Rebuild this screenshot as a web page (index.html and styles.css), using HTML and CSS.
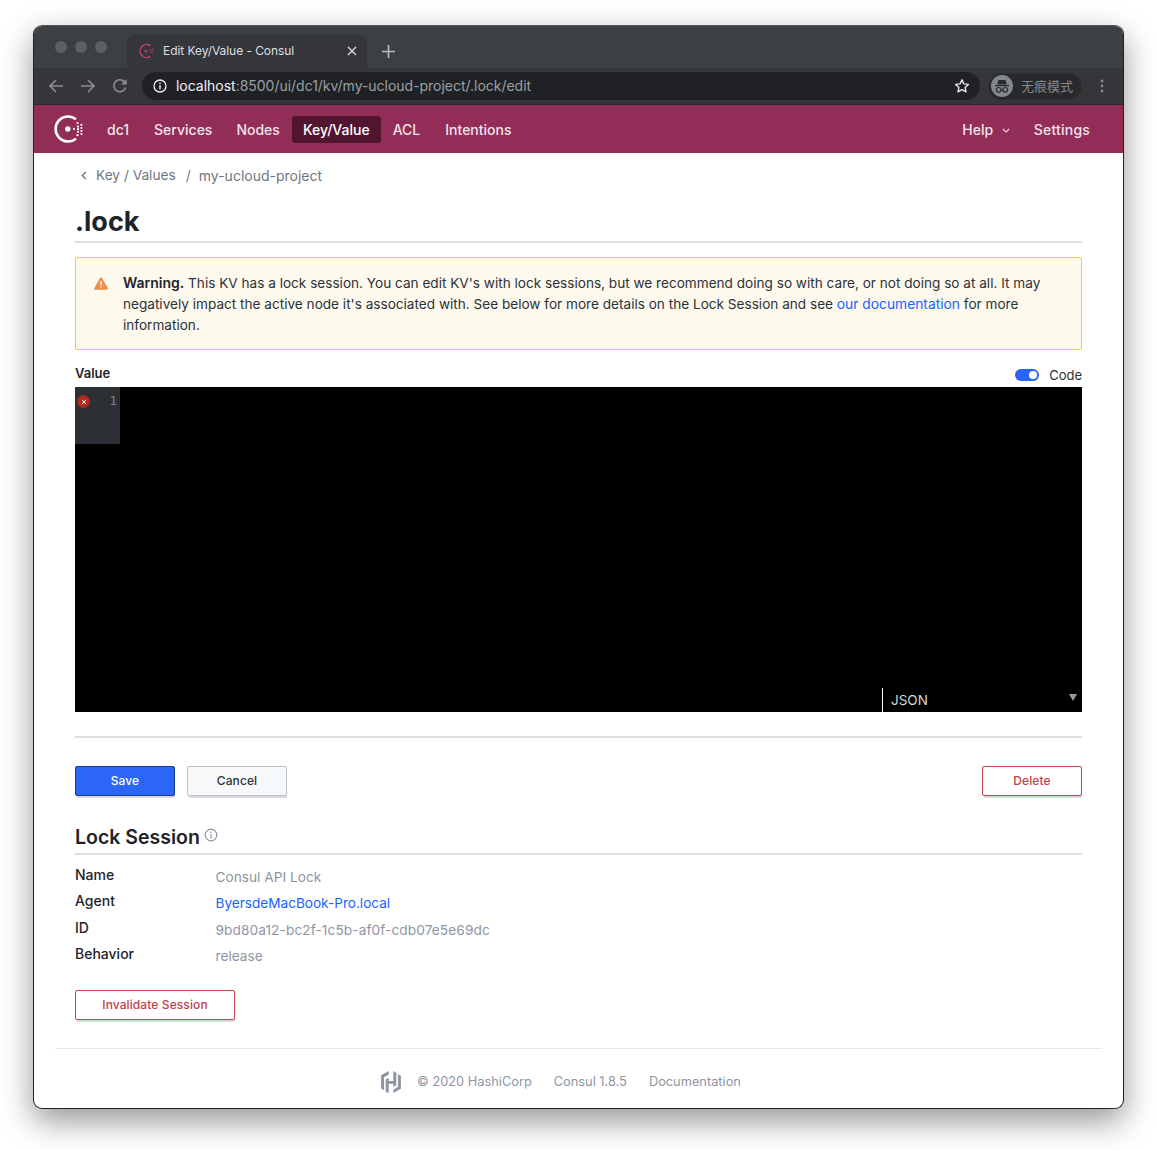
FILE: index.html
```html
<!DOCTYPE html>
<html lang="en">
<head>
<meta charset="utf-8">
<title>Edit Key/Value - Consul</title>
<link rel="stylesheet" href="styles.css">
</head>
<body>
<div class="window">
  <div class="tabstrip">
    <div class="lights"><i></i><i></i><i></i></div>
    <div class="tab">
      <svg class="favicon" viewBox="0 0 16 16" fill="none"><path d="M11.2 2.600A6.500 6.500 0 1 0 11.200 13.400" stroke="#cf3a80" stroke-width="1.300"/><circle cx="6.800" cy="8" r="1.200" fill="#cf3a80"/><g fill="#cf3a80"><circle cx="10" cy="8" r=".55"/><circle cx="12" cy="6.500" r=".55"/><circle cx="12" cy="8" r=".55"/><circle cx="12" cy="9.500" r=".55"/><circle cx="14" cy="5.500" r=".55"/><circle cx="14" cy="7.200" r=".55"/><circle cx="14" cy="8.800" r=".55"/><circle cx="14" cy="10.500" r=".55"/></g></svg>
      <span class="tab-title">Edit Key/Value - Consul</span>
      <svg class="tab-close" viewBox="0 0 10 10"><path d="M1 1l8 8M9 1l-8 8" stroke="#d8dadc" stroke-width="1.400"/></svg>
    </div>
    <svg class="newtab" viewBox="0 0 12 12"><path d="M6 0v12M0 6h12" stroke="#b8babc" stroke-width="1.500"/></svg>
  </div>
  <div class="toolbar">
    <svg class="tool" viewBox="0 0 16 16" fill="none"><path d="M15 8H2M8 2L2 8l6 6" stroke="#8a8d90" stroke-width="1.700"/></svg>
    <svg class="tool" viewBox="0 0 16 16" fill="none"><path d="M1 8h13M8 2l6 6-6 6" stroke="#8a8d90" stroke-width="1.700"/></svg>
    <svg class="tool" viewBox="0 0 16 16" fill="none"><path d="M13.600 9.500A6 6 0 1 1 12.200 3.600L14 5.400" stroke="#8a8d90" stroke-width="1.700"/><path d="M14.600 1v5.600H9z" fill="#8a8d90"/></svg>
    <div class="omnibox">
      <svg class="info" viewBox="0 0 14 14" fill="none"><circle cx="7" cy="7" r="6" stroke="#f0f1f2" stroke-width="1.300"/><path d="M7 6v4.200M7 3.600v1.300" stroke="#f0f1f2" stroke-width="1.400"/></svg>
      <span class="url"><b>localhost</b>:8500/ui/dc1/kv/my-ucloud-project/.lock/edit</span>
      <svg class="star" viewBox="0 0 16 16" fill="none"><path d="M8 1.800l1.900 4.100 4.500.5-3.300 3 .9 4.400L8 11.600l-4 2.200.9-4.400-3.300-3 4.500-.5z" stroke="#e6e7e8" stroke-width="1.400" stroke-linejoin="round"/></svg>
    </div>
    <div class="incognito">
      <span class="avatar"><svg viewBox="0 0 22 22"><path d="M7.500 5h7l1.300 4.500H6.200zM4 10h14v1.200H4z" fill="#2b2d30"/><g fill="none" stroke="#2b2d30" stroke-width="1.200"><circle cx="7.700" cy="14.800" r="2.300"/><circle cx="14.300" cy="14.800" r="2.300"/><path d="M10 14.800h2"/></g></svg></span>
      <span class="incognito-label">无痕模式</span>
    </div>
    <svg class="kebab" viewBox="0 0 4 14"><g fill="#85888b"><circle cx="2" cy="2" r="1.400"/><circle cx="2" cy="7" r="1.400"/><circle cx="2" cy="12" r="1.400"/></g></svg>
  </div>

  <nav class="appnav">
    <svg class="logo" viewBox="0 0 30 30" fill="none"><path d="M22 5.300A12.500 12.500 0 1 0 22 24.700" stroke="#fff" stroke-width="2.600"/><circle cx="13.800" cy="15" r="2.700" fill="#fff"/><g fill="#fff"><circle cx="20" cy="15" r="1.100"/><circle cx="24" cy="12.600" r="1.100"/><circle cx="24" cy="15.200" r="1.100"/><circle cx="24" cy="17.800" r="1.100"/><circle cx="27.400" cy="10.800" r="1.100"/><circle cx="27.400" cy="14" r="1.100"/><circle cx="27.400" cy="17" r="1.100"/><circle cx="27.400" cy="20" r="1.100"/><circle cx="23.500" cy="9" r="1.100"/><circle cx="23.500" cy="21.200" r="1.100"/></g></svg>
    <a class="navlink dc">dc1</a>
    <a class="navlink services">Services</a>
    <a class="navlink">Nodes</a>
    <a class="navlink active">Key/Value</a>
    <a class="navlink acl">ACL</a>
    <a class="navlink">Intentions</a>
    <span class="navspacer"></span>
    <a class="navlink help">Help <svg class="chev" viewBox="0 0 8 5" fill="none"><path d="M.8.8L4 4l3.200-3.200" stroke="#f3dfe8" stroke-width="1.100"/></svg></a>
    <a class="navlink settings">Settings</a>
  </nav>

  <main class="content">
    <div class="crumbs">
      <svg class="crumb-chev" viewBox="0 0 5 8" fill="none"><path d="M4.200.8L1 4l3.200 3.200" stroke="#6f7682" stroke-width="1.200"/></svg>
      <span class="crumb-first">Key / Values</span><span class="sep">/</span><span>my-ucloud-project</span>
    </div>
    <h1 class="title">.lock</h1>
    <div class="notice">
      <svg class="warn" viewBox="0 0 14 13"><path d="M6 .9a1.200 1.200 0 0 1 2 0l5.700 10a1.200 1.200 0 0 1-1 1.800H1.300a1.200 1.200 0 0 1-1-1.800z" fill="#ec8f4c"/><path d="M7 4v4.200M7 9.400v1.200" stroke="#fff" stroke-width="1.400"/></svg>
      <p><strong>Warning.</strong> This KV has a lock session. You can edit KV's with lock sessions, but we recommend doing so with care, or not doing so at all. It may negatively impact the active node it's associated with. See below for more details on the Lock Session and see <a class="link">our documentation</a> for more information.</p>
    </div>
    <div class="value-head">
      <span class="value-label">Value</span>
      <span class="toggle-wrap"><span class="toggle"><i></i></span><span class="toggle-label">Code</span></span>
    </div>
    <div class="editor">
      <div class="gutter">
        <span class="err"><svg viewBox="0 0 6 6"><path d="M.8.8l4.400 4.400M5.200.8L.8 5.200" stroke="#fff" stroke-width=".9"/></svg></span>
        <span class="lineno">1</span>
      </div>
      <div class="mode"><span>JSON</span><i class="caret"></i></div>
    </div>
    <hr class="rule">
    <div class="actions">
      <button class="btn primary">Save</button>
      <button class="btn secondary">Cancel</button>
      <span class="navspacer"></span>
      <button class="btn danger">Delete</button>
    </div>
    <h2 class="subtitle">Lock Session <svg class="help-i" viewBox="0 0 14 14" fill="none"><circle cx="7" cy="7" r="5.800" stroke="#8e96a3" stroke-width="1.200"/><path d="M7 6.200v4M7 3.700v1.300" stroke="#8e96a3" stroke-width="1.300"/></svg></h2>
    <dl class="meta">
      <dt>Name</dt><dd>Consul API Lock</dd>
      <dt>Agent</dt><dd><a class="link">ByersdeMacBook-Pro.local</a></dd>
      <dt>ID</dt><dd class="session-id">9bd80a12-bc2f-1c5b-af0f-cdb07e5e69dc</dd>
      <dt>Behavior</dt><dd>release</dd>
    </dl>
    <button class="btn danger invalidate">Invalidate Session</button>
  </main>

  <footer class="foot">
    <svg class="hashi" viewBox="0 0 20 22.200" fill="#8e96a3"><path d="M7.700 0L0 4.400v13.300l3 1.700V6.200l4.700-2.700z"/><path d="M12.300 0v10H7.700V6.800L4.600 8.600v12.300l3.100 1.200V12.900h4.600v3.300l3.100-1.800V1.800z"/><path d="M12.300 22.200v-3.400L17 16V3l3 1.700v13.200z"/></svg>
    <span>© 2020 HashiCorp</span><span>Consul 1.8.5</span><span>Documentation</span>
  </footer>
</div>
</body>
</html>
```
FILE: styles.css
```css
* { box-sizing: border-box; }
html, body { margin: 0; background: #fff; }
body {
  height: 1150px;
  padding: 25px 33px 0;
  font-family: Inter, "Noto Sans", sans-serif;
  overflow: hidden;
}
.window {
  width: 1091px;
  height: 1084px;
  border: 1px solid #222;
  border-top-color: #555;
  border-radius: 9px;
  background: #fff;
  overflow: hidden;
  box-shadow: 0 12px 32px rgba(0,0,0,.42);
  display: flex;
  flex-direction: column;
}
.tabstrip {
  height: 42px;
  background: #3d4043;
  display: flex;
  align-items: flex-end;
  flex: none;
}
.lights { display: flex; gap: 8px; align-self: flex-start; margin: 15px 0 0 21px; width: 72px; flex: none; }
.lights i { width: 12px; height: 12px; border-radius: 50%; background: #5d6063; }
.tab {
  width: 240px;
  height: 34px;
  background: #35363a;
  border-radius: 9px 9px 0 0;
  display: flex;
  align-items: center;
  padding: 0 10px 0 12px;
}
.favicon { width: 16px; height: 16px; flex: none; }
.tab-title { color: #dcdee0; font-size: 12px; margin: 0 0 2px 8px; flex: 1; white-space: nowrap; letter-spacing: -.06px; }
.tab-close { width: 10px; height: 10px; }
.newtab { width: 13px; height: 13px; margin: 0 0 10px 15px; }
.toolbar {
  height: 37px;
  flex: none;
  background: #35363a;
  display: flex;
  align-items: center;
  padding-left: 14px;
  border-bottom: 1px solid #2a2b2e;
}
.tool { width: 16px; height: 16px; margin-right: 16px; flex: none; }
.omnibox {
  width: 838px;
  height: 28px;
  margin-left: -2px;
  background: #202124;
  border-radius: 14px;
  display: flex;
  align-items: center;
  padding: 0 10px 0 11px;
  flex: none;
}
.info { width: 14px; height: 14px; flex: none; }
.url { color: #9aa0a6; font-size: 14px; margin: 0 0 2px 9px; flex: 1; white-space: nowrap; letter-spacing: -.02px; }
.url b { color: #f1f3f4; font-weight: 400; }
.star { width: 16px; height: 16px; flex: none; }
.incognito {
  width: 94px;
  height: 27px;
  margin-left: 8px;
  border: 1px solid #2e3033;
  background: #28292c;
  border-radius: 14px;
  display: flex;
  align-items: center;
  padding-left: 2px;
  flex: none;
}
.avatar { width: 22px; height: 22px; border-radius: 50%; background: #85888b; display: block; flex: none; }
.avatar svg { display: block; width: 22px; height: 22px; }
.incognito-label { color: #85888b; font-size: 13px; margin: 0 0 2px 8px; font-family: "Noto Sans CJK SC", sans-serif; white-space: nowrap; }
.kebab { width: 4px; height: 14px; margin-left: 18px; flex: none; }

.appnav {
  height: 48px;
  flex: none;
  background: #912d57;
  display: flex;
  align-items: center;
  padding: 0 21px 0 20px;
  color: #f3e3ea;
}
.logo { width: 30px; height: 30px; flex: none; }
.navlink { font-size: 14px; font-weight: 500; padding: 0 12px; height: 27px; line-height: 27px; border-radius: 3px; white-space: nowrap; }
.dc { margin-left: 11px; }
.services { margin-left: 1px; }
.active { background: #521530; color: #fff; padding: 0 11px; }
.acl { padding-right: 13px; }
.navspacer { flex: 1; }
.chev { width: 8px; height: 5px; margin: 0 0 1px 5px; vertical-align: middle; }
.help { padding-right: 12px; }
.settings { letter-spacing: .2px; }

.content { padding: 0 41px; flex: 1; }
.crumbs { height: 46px; padding-top: 14px; display: flex; align-items: flex-start; font-size: 14px; line-height: 17px; color: #6f7682; }
.crumb-chev { width: 6px; height: 9px; margin: 4px 9px 0 6px; flex: none; }
.crumb-first { font-size: 13.700px; }
.sep { margin: 0 8px 0 10px; }
.title {
  margin: 0;
  height: 44px;
  font-size: 27px;
  line-height: 46px;
  font-weight: 700;
  color: #1f2329;
  border-bottom: 2px solid #dce0e6;
}
.notice {
  margin-top: 14px;
  height: 93px;
  border: 1px solid #f0c95e;
  background: #fdf9ed;
  border-radius: 2px;
  padding: 14px 40px 0 18px;
  display: flex;
  align-items: flex-start;
}
.warn { width: 14px; height: 13px; margin-top: 5px; flex: none; }
.notice p { margin: 0 0 0 15px; font-size: 13.600px; line-height: 21px; color: #2d3138; }
.notice strong { font-size: 14px; font-weight: 600; color: #1f2329; }
.notice .link { font-size: 13.800px; }
.link { color: #1563ff; }
.value-head { display: flex; align-items: flex-end; justify-content: space-between; height: 37px; }
.value-label { font-size: 13px; font-weight: 600; color: #1f2329; line-height: 16px; margin: 0 0 6px 0; }
.toggle-wrap { display: flex; align-items: center; margin-bottom: 4px; }
.toggle { width: 24px; height: 12px; border-radius: 6px; background: #2a64f6; display: block; position: relative; }
.toggle i { position: absolute; right: 2px; top: 2px; width: 8px; height: 8px; border-radius: 50%; background: #fff; }
.toggle-label { font-size: 13px; margin-left: 10px; color: #2d3138; line-height: 16px; }
.editor { height: 325px; background: #000; position: relative; display: flex; flex-direction: column; justify-content: space-between; }
.gutter { width: 45px; height: 57px; background: #2c2f33; display: flex; justify-content: space-between; align-items: flex-start; padding: 8px 3px 0 2px; }
.err { width: 13px; height: 13px; border-radius: 50%; background: #ab2a1c; display: flex; align-items: center; justify-content: center; }
.err svg { width: 6px; height: 6px; display: block; }
.lineno { font-family: "DejaVu Sans Mono", monospace; font-size: 13px; line-height: 13px; color: #6d8a88; margin-top: -1px; }
.mode { width: 200px; height: 24px; align-self: flex-end; border-left: 1px solid #fff; color: #d8d8d8; font-size: 13.500px; display: flex; align-items: center; justify-content: space-between; padding: 0 5px 0 8px; }
.caret { width: 0; height: 0; border-left: 4px solid transparent; border-right: 4px solid transparent; border-top: 7px solid #9a9a9a; margin-top: -5px; }
.rule { margin: 24px 0 0; border: 0; height: 2px; background: #dce0e6; }
.actions { display: flex; gap: 12px; margin-top: 28px; }
.btn {
  width: 100px;
  height: 30px;
  font-family: Inter, sans-serif;
  font-size: 12px;
  font-weight: 500;
  letter-spacing: .1px;
  border-radius: 2px;
  padding: 0 0 2px;
  background: #fff;
  box-shadow: 1px 3px 0 -1px rgba(60,70,85,.2);
}
.primary { background: #2b66f6; border: 1px solid #143a8c; color: #fff; }
.secondary { background: #f7f8fa; border: 1px solid #bcc2cc; color: #2d3138; }
.danger { background: #fff; border: 1px solid #c2404f; color: #c2404f; }
.subtitle {
  margin: 28px 0 0;
  height: 31px;
  font-size: 19.500px;
  line-height: 26px;
  font-weight: 600;
  color: #1f2329;
  border-bottom: 2px solid #dce0e6;
}
.help-i { width: 14px; height: 14px; vertical-align: 2px; margin-left: -1px; }
.meta { margin: 9px 0 0; display: grid; grid-template-columns: 140.500px 1fr; grid-auto-rows: 26.300px; font-size: 13.700px; line-height: 26px; }
.meta dt { font-weight: 500; font-size: 14px; color: #1f2329; margin-top: -2px; }
.meta dd { margin: 0; color: #8e96a3; }
.meta .session-id { letter-spacing: .08px; }
.meta .link { font-size: 13.600px; }
.invalidate { display: block; width: 160px; margin-top: 21px; }
.foot {
  margin: 0 21px;
  height: 60px;
  flex: none;
  border-top: 1px solid #e4e6ea;
  display: flex;
  align-items: center;
  justify-content: center;
  font-size: 12.800px;
  color: #8e96a3;
  gap: 22px;
  padding: 6px 35px 0 0;
}
.hashi { width: 20px; height: 22px; margin-right: -6px; flex: none; }
```
